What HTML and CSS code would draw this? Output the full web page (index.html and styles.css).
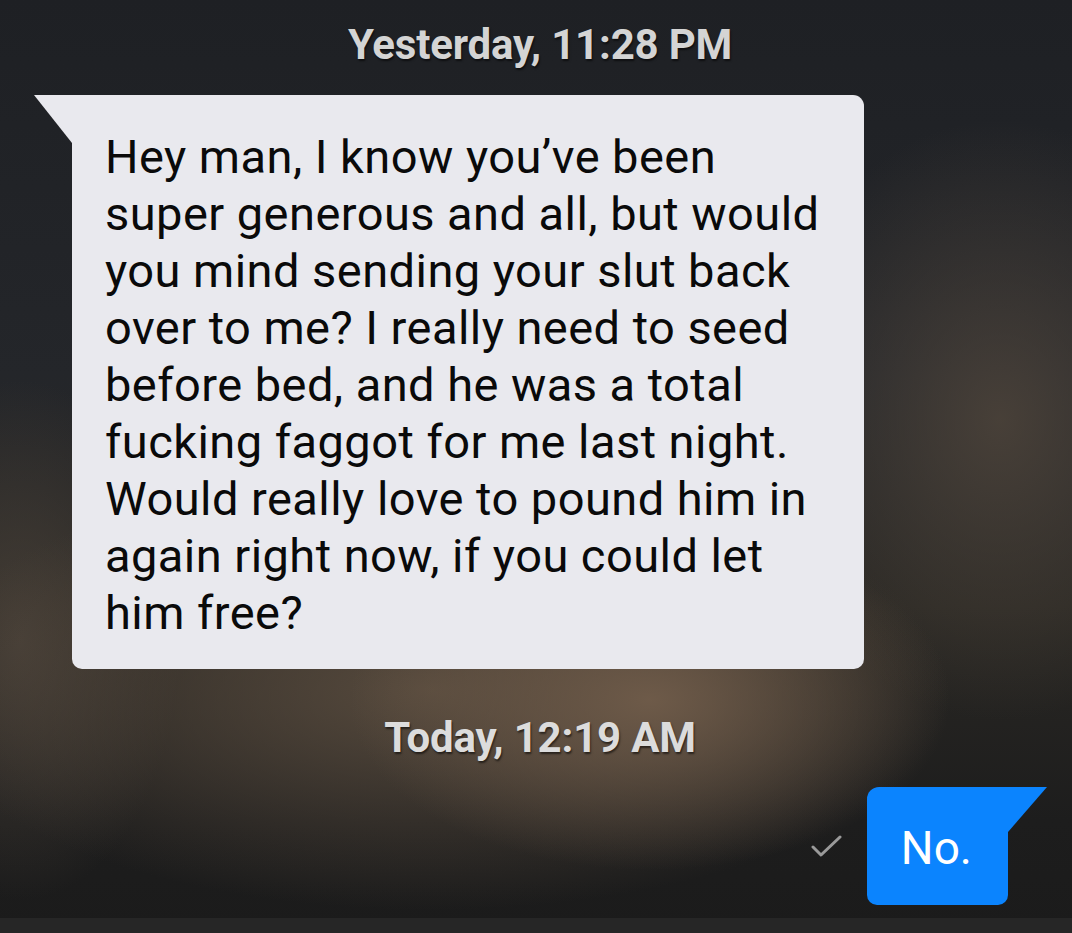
FILE: index.html
```html
<!DOCTYPE html>
<html lang="en">
<head>
<meta charset="utf-8">
<title>Messages</title>
<link rel="stylesheet" href="styles.css">
</head>
<body>
<main class="thread">
  <div class="stamp stamp-first">Yesterday, 11:28 PM</div>
  <div class="row row-in">
    <div class="bubble bubble-in">Hey man, I know you’ve been super generous and all, but would you mind sending your slut back over to me? I really need to seed before bed, and he was a total fucking faggot for me last night. Would really love to pound him in again right now, if you could let him free?</div>
  </div>
  <div class="stamp stamp-second">Today, 12:19 AM</div>
  <div class="row row-out">
    <svg class="check" width="32" height="24" viewBox="0 0 32 24" aria-hidden="true">
      <path d="M2 13 L10 21 L29 3" fill="none" stroke="#9a9a9a" stroke-width="3" stroke-linecap="round" stroke-linejoin="round"/>
    </svg>
    <div class="bubble bubble-out">No.</div>
  </div>
</main>
<footer class="bottom-band"></footer>
</body>
</html>
```

FILE: styles.css
```css
html, body {
  margin: 0;
  padding: 0;
}

body {
  width: 1072px;
  height: 933px;
  overflow: hidden;
  font-family: Roboto, "Noto Sans", sans-serif;
  display: flex;
  flex-direction: column;
  background:
    radial-gradient(ellipse 300px 170px at 650px 700px, rgba(112, 92, 74, 0.95), rgba(112, 92, 74, 0) 100%),
    radial-gradient(ellipse 520px 220px at 430px 690px, rgba(92, 78, 64, 0.9), rgba(92, 78, 64, 0) 100%),
    radial-gradient(ellipse 160px 260px at 20px 640px, rgba(72, 64, 56, 0.9), rgba(72, 64, 56, 0) 100%),
    radial-gradient(ellipse 240px 300px at 1000px 420px, rgba(80, 70, 60, 0.8), rgba(80, 70, 60, 0) 100%),
    radial-gradient(ellipse 260px 120px at 470px 230px, rgba(74, 60, 48, 0.7), rgba(74, 60, 48, 0) 100%),
    linear-gradient(180deg, #1e2024 0%, #24262a 40%, #2a2824 65%, #1d1d1d 88%, #1b1b1b 100%);
}

.thread {
  flex: 1;
  display: flex;
  flex-direction: column;
}

.stamp {
  font-size: 42px;
  font-weight: 700;
  line-height: 50px;
  color: #d4d4d4;
  text-align: center;
  padding-left: 8px;
  letter-spacing: -0.2px;
  text-shadow: 1px 2px 2px rgba(0, 0, 0, 0.55);
}

.stamp-first {
  padding-top: 20px;
}

.stamp-second {
  margin-top: 44px;
  color: #dcdcdc;
}

.row {
  display: flex;
  align-items: center;
}

.row-in {
  margin-top: 25px;
  padding-left: 72px;
}

.row-out {
  margin-top: 24px;
  justify-content: flex-end;
  padding-right: 64px;
  gap: 24px;
}

.bubble {
  position: relative;
  font-size: 46px;
  line-height: 57px;
}

.bubble-in {
  box-sizing: border-box;
  width: 792px;
  padding: 33px 28px 28px 33px;
  background: #e9e9ee;
  color: #0a0a0a;
  font-size: 47px;
  letter-spacing: 0.45px;
  border-radius: 0 11px 10px 10px;
}

.bubble-in::before {
  content: "";
  position: absolute;
  left: -38px;
  top: 0;
  width: 38px;
  height: 48px;
  background: #e9e9ee;
  clip-path: polygon(0 0, 100% 0, 100% 100%);
}

.bubble-out {
  padding: 33px 36px 28px 34px;
  background: #0b84fe;
  color: #ffffff;
  border-radius: 12px 0 10px 10px;
}

.bubble-out::after {
  content: "";
  position: absolute;
  right: -39px;
  top: 0;
  width: 39px;
  height: 45px;
  background: #0b84fe;
  clip-path: polygon(0 0, 100% 0, 0 100%);
}

.check {
  display: block;
}

.bottom-band {
  height: 15px;
  margin-top: 13px;
  background: #262626;
}
```
